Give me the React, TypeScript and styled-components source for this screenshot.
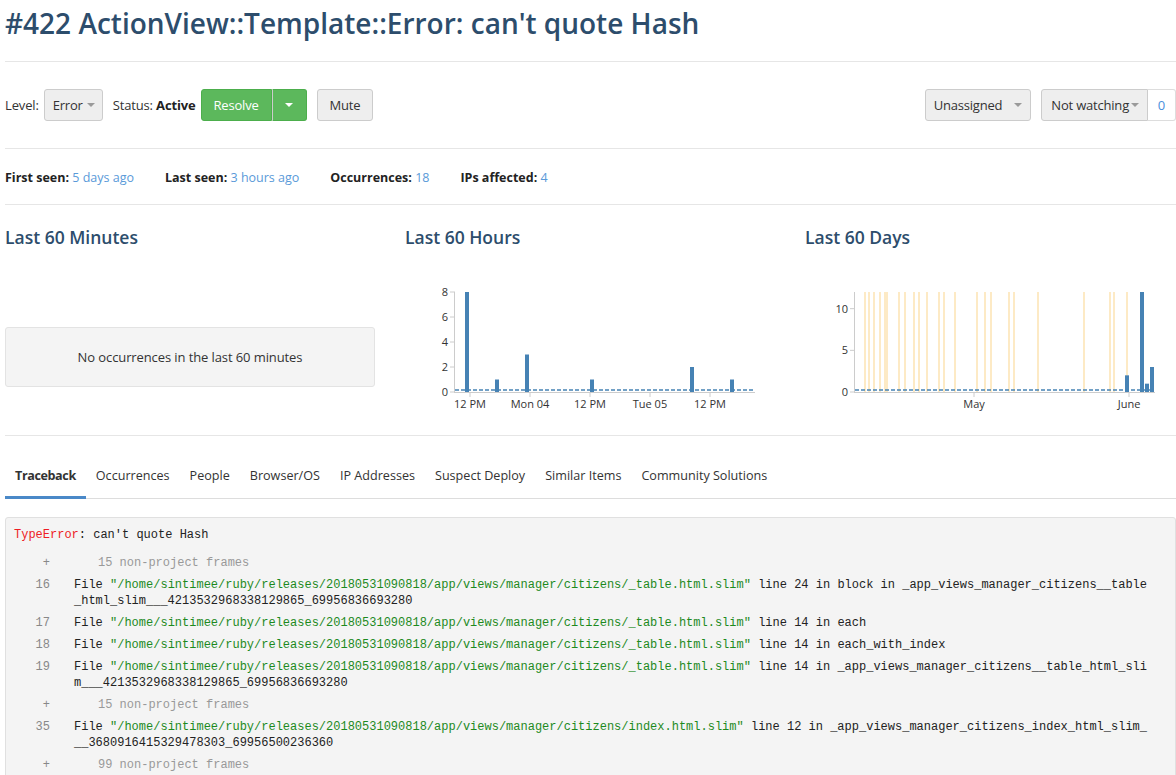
import React from 'react';
import styled, { createGlobalStyle } from 'styled-components';

const GlobalStyle = createGlobalStyle`
    body {
        margin: 0;
        background: #fff;
        color: #333;
        font-family: "Open Sans", "Noto Sans", sans-serif;
        font-size: 13px;
    }
`;

const Page = styled.div`
    padding-left: 5px;
    overflow: hidden;
`;

const Title = styled.h1`
    margin: 0;
    padding: 4px 0 19px;
    font-size: 28px;
    font-weight: 600;
    line-height: 38px;
    color: #2d4d6c;
    border-bottom: 1px solid #e6e6e6;
    white-space: nowrap;
`;

const Toolbar = styled.div`
    display: flex;
    align-items: center;
    padding: 27px 0;
    border-bottom: 1px solid #e6e6e6;
`;

const Group = styled.div<{ $push?: boolean }>`
    display: flex;
    align-items: center;
    margin-left: ${(p) => (p.$push ? 'auto' : '0')};
`;

const Label = styled.span`
    margin-right: 5px;
    letter-spacing: -0.15px;
    b {
        font-weight: 700;
        color: #222;
    }
`;

type ButtonProps = {
    $variant?: 'default' | 'success';
    $gap?: number;
    $join?: 'left' | 'right';
    $pad?: string;
    $inner?: number;
};

const Button = styled.button<ButtonProps>`
    display: inline-flex;
    align-items: center;
    gap: ${(p) => p.$inner ?? 5}px;
    height: 32px;
    padding: ${(p) => p.$pad ?? '0 9px'};
    margin-right: ${(p) => p.$gap ?? 0}px;
    font-family: inherit;
    font-size: 13px;
    letter-spacing: -0.2px;
    border: 1px solid ${(p) => (p.$variant === 'success' ? '#4cae4c' : '#cccccc')};
    border-radius: ${(p) => (p.$join === 'left' ? '3px 0 0 3px' : p.$join === 'right' ? '0 3px 3px 0' : '3px')};
    background: ${(p) => (p.$variant === 'success' ? '#5cb85c' : '#eeeeee')};
    color: ${(p) => (p.$variant === 'success' ? '#fff' : '#333')};
    cursor: pointer;
    & + & {
        border-left-color: ${(p) => (p.$variant === 'success' ? '#449d44' : '#cccccc')};
    }
`;

const Caret = styled.span<{ $color?: string }>`
    display: inline-block;
    width: 0;
    height: 0;
    border-left: 4px solid transparent;
    border-right: 4px solid transparent;
    border-top: 4px solid ${(p) => p.$color ?? '#9a9a9a'};
`;

const Split = styled.div<{ $gap?: number }>`
    display: flex;
    margin-right: ${(p) => p.$gap ?? 0}px;
`;

const Count = styled.span`
    display: inline-flex;
    align-items: center;
    justify-content: center;
    height: 32px;
    box-sizing: border-box;
    width: 28px;
    border: 1px solid #dddddd;
    border-left: none;
    border-radius: 0 3px 3px 0;
    color: #4a8fdc;
`;

const Stats = styled.div`
    display: flex;
    gap: 31px;
    padding: 20px 0 17px;
    line-height: 18px;
    font-size: 12.5px;
    border-bottom: 1px solid #e6e6e6;
    b {
        color: #222;
        font-weight: 700;
    }
    a {
        color: #5a9ad9;
        text-decoration: none;
    }
`;

const Charts = styled.div`
    display: grid;
    grid-template-columns: 400px 400px 400px;
    padding: 20px 0 15px;
    border-bottom: 1px solid #e6e6e6;
`;

const ChartCol = styled.div`
    display: flex;
    flex-direction: column;
`;

const ChartTitle = styled.h3`
    margin: 0 0 11px;
    font-size: 17.5px;
    font-weight: 600;
    line-height: 24px;
    color: #2d4d6c;
`;

const ChartArea = styled.div`
    height: 160px;
`;

const Empty = styled.div`
    margin-top: 67px;
    width: 370px;
    height: 60px;
    box-sizing: border-box;
    display: flex;
    align-items: center;
    justify-content: center;
    background: #f4f4f4;
    border: 1px solid #e3e3e3;
    border-radius: 3px;
    letter-spacing: -0.1px;
`;

const Tabs = styled.div`
    display: flex;
    margin-top: 21px;
    border-bottom: 1px solid #dddddd;
`;

const Tab = styled.a<{ $active?: boolean }>`
    padding: 10px 10px 11px;
    line-height: 18px;
    font-size: 12.6px;
    font-weight: ${(p) => (p.$active ? 700 : 400)};
    letter-spacing: ${(p) => (p.$active ? '-0.4px' : '0')};
    color: #333;
    border-bottom: 3px solid ${(p) => (p.$active ? '#4a89c8' : 'transparent')};
    margin-bottom: -1px;
    white-space: nowrap;
`;

const Trace = styled.div`
    margin-top: 18px;
    padding: 9px 8px 8px;
    background: #f4f4f4;
    border: 1px solid #e0e0e0;
    border-radius: 3px;
    font-family: "Liberation Mono", "DejaVu Sans Mono", monospace;
    font-size: 12px;
    line-height: 16px;
`;

const ErrorLine = styled.div`
    color: #222;
    span {
        color: #ee1c25;
    }
`;

const Frames = styled.div`
    margin-top: 9px;
`;

const Frame = styled.div`
    display: grid;
    grid-template-columns: 36px 1076px;
    column-gap: 24px;
    padding: 3px 0;
`;

const LineNo = styled.span`
    text-align: right;
    color: #888;
`;

const Code = styled.span<{ $muted?: boolean }>`
    word-break: break-all;
    color: ${(p) => (p.$muted ? '#999' : '#222')};
    padding-left: ${(p) => (p.$muted ? 24 : 0)}px;
    em {
        font-style: normal;
        color: #1d8a1d;
    }
`;

const Axis = styled.svg`
    display: block;
    overflow: visible;
    text {
        font-family: "Open Sans", "Noto Sans", sans-serif;
        font-size: 11px;
        fill: #333;
    }
`;

const BAR = '#4682b4';

type Bar = { x: number; v: number };

const HoursChart: React.FC = () => {
    const base = 132;
    const unit = 12.5;
    const bars: Bar[] = [
        { x: 60, v: 8 },
        { x: 90, v: 1 },
        { x: 120, v: 3 },
        { x: 185, v: 1 },
        { x: 285, v: 2 },
        { x: 325, v: 1 },
    ];
    const xt = [
        { x: 65, t: '12 PM' },
        { x: 125, t: 'Mon 04' },
        { x: 185, t: '12 PM' },
        { x: 245, t: 'Tue 05' },
        { x: 305, t: '12 PM' },
    ];
    return (
        <Axis width="400" height="160">
            {[0, 2, 4, 6, 8].map((v) => (
                <g key={v}>
                    <line x1="45" x2="50" y1={base - v * unit} y2={base - v * unit} stroke="#ccc" />
                    <text x="43" y={base - v * unit + 4} textAnchor="end">
                        {v}
                    </text>
                </g>
            ))}
            <line x1="49.5" x2="49.5" y1="32" y2={base + 1} stroke="#ccc" />
            <line x1="49.5" x2="350" y1={base + 0.5} y2={base + 0.5} stroke="#ccc" />
            {xt.map((t) => (
                <g key={t.x}>
                    <line x1={t.x} x2={t.x} y1={base} y2={base + 5} stroke="#ccc" />
                    <text x={t.x} y={base + 16} textAnchor="middle">
                        {t.t}
                    </text>
                </g>
            ))}
            {bars.map((b) => (
                <rect key={b.x} x={b.x} y={base - b.v * unit} width="4" height={b.v * unit} fill={BAR} />
            ))}
            <line x1="50" x2="350" y1={base - 2} y2={base - 2} stroke={BAR} strokeWidth="1.5" strokeDasharray="4 2" />
        </Axis>
    );
};

const deploys = [
    865, 869, 874, 880, 885, 887, 899, 905, 914, 919, 927, 939, 944, 955, 977, 985, 991, 1009, 1014, 1038, 1084,
    1110, 1114, 1127,
];

const DaysChart: React.FC = () => {
    const base = 132;
    const unit = 100 / 12;
    const bars: Bar[] = [
        { x: 320, v: 2 },
        { x: 335, v: 12 },
        { x: 340, v: 1 },
        { x: 345, v: 3 },
    ];
    return (
        <Axis width="400" height="160">
            {deploys.map((d) => (
                <line key={d} x1={d - 805} x2={d - 805} y1="32" y2={base} stroke="#fde3b2" strokeWidth="1.5" />
            ))}
            {[0, 5, 10].map((v) => (
                <g key={v}>
                    <line x1="45" x2="50" y1={base - v * unit} y2={base - v * unit} stroke="#ccc" />
                    <text x="43" y={base - v * unit + 4} textAnchor="end">
                        {v}
                    </text>
                </g>
            ))}
            <line x1="49.5" x2="49.5" y1="32" y2={base + 1} stroke="#ccc" />
            <line x1="49.5" x2="350" y1={base + 0.5} y2={base + 0.5} stroke="#ccc" />
            {[
                { x: 169, t: 'May' },
                { x: 324, t: 'June' },
            ].map((t) => (
                <g key={t.x}>
                    <line x1={t.x} x2={t.x} y1={base} y2={base + 5} stroke="#ccc" />
                    <text x={t.x} y={base + 16} textAnchor="middle">
                        {t.t}
                    </text>
                </g>
            ))}
            {bars.map((b) => (
                <rect key={b.x} x={b.x} y={base - b.v * unit} width="4" height={b.v * unit} fill={BAR} />
            ))}
            <line x1="50" x2="350" y1={base - 2} y2={base - 2} stroke={BAR} strokeWidth="1.5" strokeDasharray="4 2" />
        </Axis>
    );
};

const ROOT = '/home/sintimee/ruby/releases/20180531090818/app/views/manager/citizens/';

type FrameData = { no?: number; file?: string; line?: number; method?: string; hidden?: number };

const frames: FrameData[] = [
    { hidden: 15 },
    { no: 16, file: '_table.html.slim', line: 24, method: 'block in _app_views_manager_citizens__table_html_slim___4213532968338129865_69956836693280' },
    { no: 17, file: '_table.html.slim', line: 14, method: 'each' },
    { no: 18, file: '_table.html.slim', line: 14, method: 'each_with_index' },
    { no: 19, file: '_table.html.slim', line: 14, method: '_app_views_manager_citizens__table_html_slim___4213532968338129865_69956836693280' },
    { hidden: 15 },
    { no: 35, file: 'index.html.slim', line: 12, method: '_app_views_manager_citizens_index_html_slim___3680916415329478303_69956500236360' },
    { hidden: 99 },
];

const tabs = ['Traceback', 'Occurrences', 'People', 'Browser/OS', 'IP Addresses', 'Suspect Deploy', 'Similar Items', 'Community Solutions'];

const App: React.FC = (): JSX.Element => {
    return (
        <>
            <GlobalStyle />
            <Page>
                <Title>#422 ActionView::Template::Error: can't quote Hash</Title>

                <Toolbar>
                    <Group>
                        <Label>Level:</Label>
                        <Button $gap={10} $pad="0 7px 0 8px" $inner={4}>
                            Error <Caret />
                        </Button>
                        <Label>
                            Status: <b>Active</b>
                        </Label>
                        <Split $gap={10}>
                            <Button $variant="success" $join="left" $pad="0 12px">
                                Resolve
                            </Button>
                            <Button $variant="success" $join="right" $pad="0 13px 0 12px">
                                <Caret $color="#fff" />
                            </Button>
                        </Split>
                        <Button $pad="0 12px">Mute</Button>
                    </Group>
                    <Group $push>
                        <Button $gap={10} $pad="0 8px" $inner={12}>
                            Unassigned <Caret />
                        </Button>
                        <Split>
                            <Button $join="left" $pad="0 8px 0 9px" $inner={2}>
                                Not watching <Caret />
                            </Button>
                            <Count>0</Count>
                        </Split>
                    </Group>
                </Toolbar>

                <Stats>
                    <span>
                        <b>First seen:</b> <a>5 days ago</a>
                    </span>
                    <span>
                        <b>Last seen:</b> <a>3 hours ago</a>
                    </span>
                    <span>
                        <b>Occurrences:</b> <a>18</a>
                    </span>
                    <span>
                        <b>IPs affected:</b> <a>4</a>
                    </span>
                </Stats>

                <Charts>
                    <ChartCol>
                        <ChartTitle>Last 60 Minutes</ChartTitle>
                        <ChartArea>
                            <Empty>No occurrences in the last 60 minutes</Empty>
                        </ChartArea>
                    </ChartCol>
                    <ChartCol>
                        <ChartTitle>Last 60 Hours</ChartTitle>
                        <ChartArea>
                            <HoursChart />
                        </ChartArea>
                    </ChartCol>
                    <ChartCol>
                        <ChartTitle>Last 60 Days</ChartTitle>
                        <ChartArea>
                            <DaysChart />
                        </ChartArea>
                    </ChartCol>
                </Charts>

                <Tabs>
                    {tabs.map((t, i) => (
                        <Tab key={t} $active={i === 0}>
                            {t}
                        </Tab>
                    ))}
                </Tabs>

                <Trace>
                    <ErrorLine>
                        <span>TypeError</span>: can't quote Hash
                    </ErrorLine>
                    <Frames>
                        {frames.map((f, i) =>
                            f.hidden ? (
                                <Frame key={i}>
                                    <LineNo>+</LineNo>
                                    <Code $muted>{f.hidden} non-project frames</Code>
                                </Frame>
                            ) : (
                                <Frame key={i}>
                                    <LineNo>{f.no}</LineNo>
                                    <Code>
                                        File <em>"{ROOT + f.file}"</em> line {f.line} in {f.method}
                                    </Code>
                                </Frame>
                            ),
                        )}
                    </Frames>
                </Trace>
            </Page>
        </>
    );
};

export default App;
